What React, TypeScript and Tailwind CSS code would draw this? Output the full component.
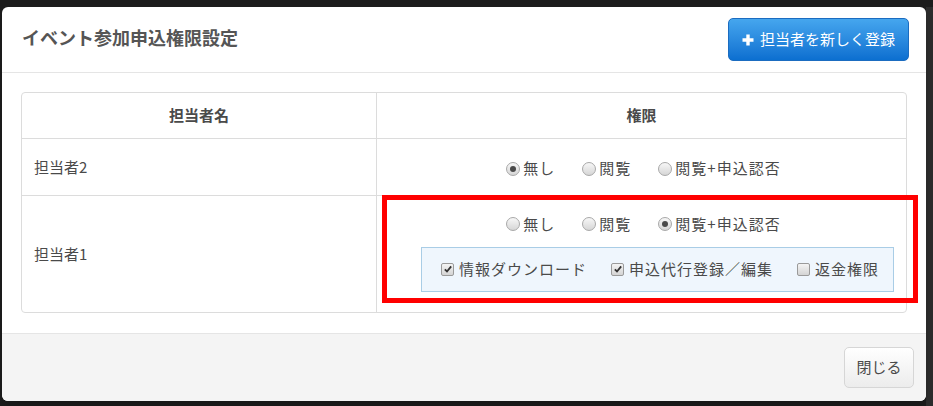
import React from "react";

const font = { fontFamily: '"Noto Sans CJK JP", "Noto Sans", sans-serif' };

function Radio({ checked, label }: { checked?: boolean; label: string }) {
  return (
    <label className="flex items-center gap-[3px]">
      <span className="flex h-[14px] w-[14px] items-center justify-center rounded-full border border-[#a8a8a8] bg-gradient-to-b from-[#f7f7f7] to-[#d6d6d6]">
        {checked && <span className="h-[6px] w-[6px] rounded-full bg-[#4a4a4a]" />}
      </span>
      <span className="tracking-[1px]">{label}</span>
    </label>
  );
}

function Check({ checked, label }: { checked?: boolean; label: string }) {
  return (
    <label className="flex items-center gap-[5px]">
      <span className="flex h-[13px] w-[13px] items-center justify-center rounded-[2px] border border-[#9a9a9a] bg-gradient-to-b from-[#f4f4f4] to-[#d4d4d4]">
        {checked && (
          <svg viewBox="0 0 12 12" className="h-[10px] w-[10px]">
            <path d="M2.2 6.4 L4.8 9 L9.8 2.8" fill="none" stroke="#333" strokeWidth="2.2" />
          </svg>
        )}
      </span>
      <span className="tracking-[1px]">{label}</span>
    </label>
  );
}

function RadioRow({ value }: { value: number }) {
  return (
    <div className="flex justify-center gap-[27px] pl-[4px] text-[15px] text-[#4a4a4a]">
      <Radio checked={value === 0} label="無し" />
      <Radio checked={value === 1} label="閲覧" />
      <Radio checked={value === 2} label="閲覧+申込認否" />
    </div>
  );
}

export default function App() {
  return (
    <div className="relative h-[406px] w-[933px] overflow-hidden bg-[#1c1c1c] pl-[2px] pt-[7px]" style={font}>
      <div className="absolute right-0 top-[7px] h-[399px] w-[7px] bg-[#2c2c2c]" />
      <div className="relative flex h-[394px] w-[924px] flex-col overflow-hidden rounded-[6px] bg-white shadow-lg">
        {/* header */}
        <div className="flex h-[66px] items-start justify-between border-b border-[#e5e5e5] pl-[20px] pr-[17px] pt-[11px]">
          <h1 className="pt-[6px] text-[18px] font-bold text-[#555]">イベント参加申込権限設定</h1>
          <button className="flex h-[43px] w-[181px] items-center justify-center gap-[6px] rounded-[5px] border border-[#1b6cc0] bg-gradient-to-b from-[#45a6ee] to-[#0b6fd0] text-[15px] text-white">
            <svg viewBox="0 0 12 12" className="h-[12px] w-[12px]">
              <path d="M4.3 0.5h3.4v3.8h3.8v3.4H7.7v3.8H4.3V7.7H0.5V4.3h3.8z" fill="white" />
            </svg>
            担当者を新しく登録
          </button>
        </div>

        {/* body */}
        <div className="flex-1 px-[19px] pt-[19px]">
          <div className="overflow-hidden rounded-[4px] border border-[#dcdcdc] text-[15px] text-[#4a4a4a]">
            <div className="grid grid-cols-[355px_1fr] border-b border-[#dcdcdc]">
              <div className="flex h-[45px] items-center justify-center border-r border-[#dcdcdc] font-bold">担当者名</div>
              <div className="flex h-[45px] items-center justify-center font-bold">権限</div>
            </div>
            <div className="grid grid-cols-[355px_1fr] border-b border-[#dcdcdc]">
              <div className="flex h-[56px] items-center border-r border-[#dcdcdc] pl-[12px]">担当者2</div>
              <div className="flex h-[56px] items-center justify-center pt-[3px]">
                <RadioRow value={0} />
              </div>
            </div>
            <div className="grid grid-cols-[355px_1fr]">
              <div className="flex h-[116px] items-center border-r border-[#dcdcdc] pl-[12px]">担当者1</div>
              <div className="flex h-[116px] flex-col pt-[17px]">
                <RadioRow value={2} />
                <div className="ml-[44px] mr-[12px] mt-[11px] flex h-[45px] items-center gap-[24px] border border-[#a9cde6] bg-[#eff6fd] pl-[19px]">
                  <Check checked label="情報ダウンロード" />
                  <Check checked label="申込代行登録／編集" />
                  <Check label="返金権限" />
                </div>
              </div>
            </div>
          </div>
        </div>

        {/* footer */}
        <div className="flex h-[68px] items-start justify-end border-t border-[#e5e5e5] bg-[#f4f4f4] pr-[12px] pt-[13px]">
          <button className="h-[41px] w-[70px] rounded-[5px] border border-[#d6d6d6] bg-gradient-to-b from-white to-[#ececec] text-[15px] text-[#4a4a4a]">
            閉じる
          </button>
        </div>

        {/* annotation */}
        <div className="absolute left-[380px] top-[188px] h-[108px] w-[536px] border-[5px] border-[#ff0000]" />
      </div>
    </div>
  );
}
